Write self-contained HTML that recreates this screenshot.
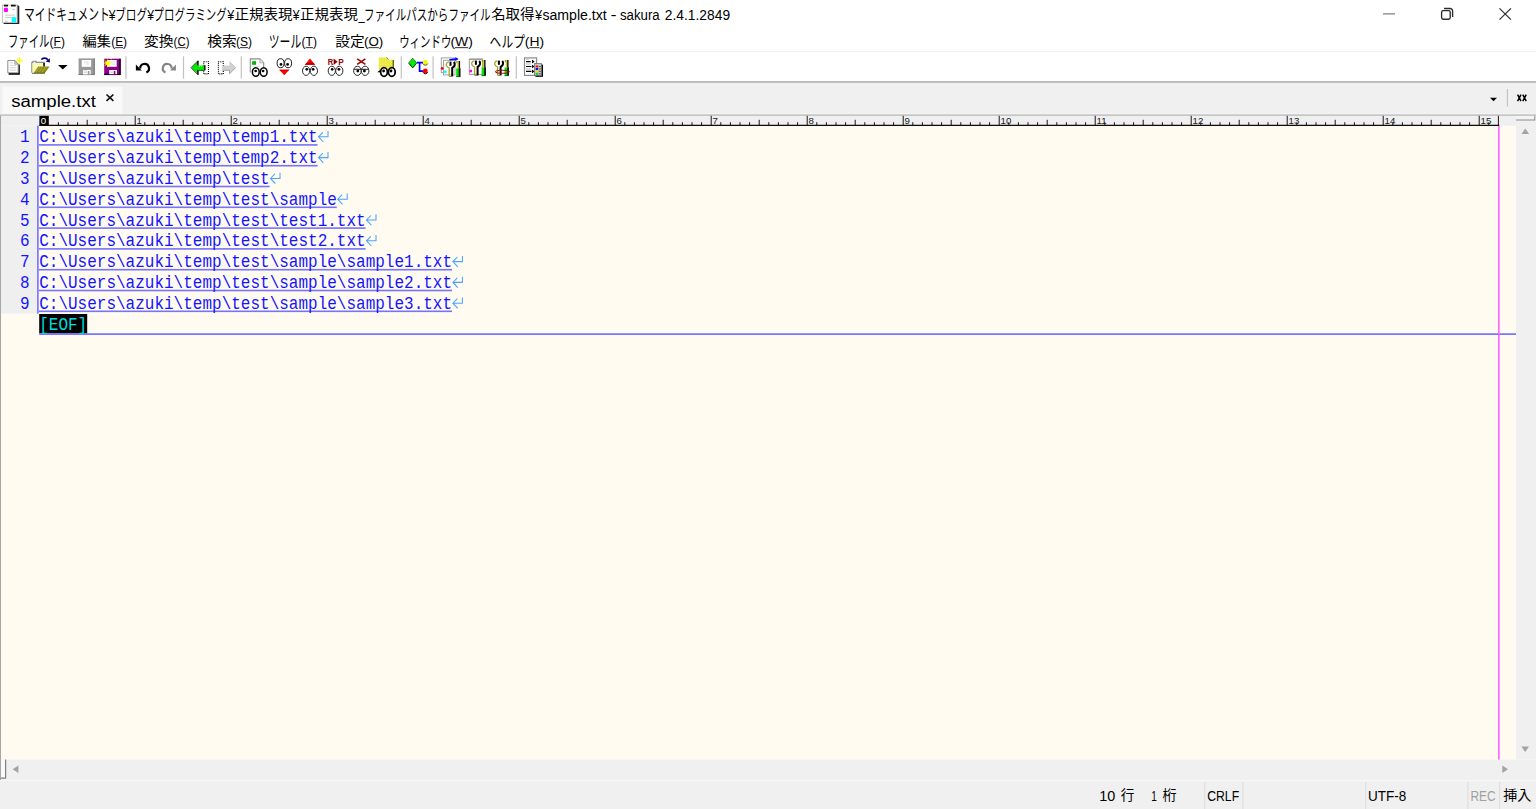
<!DOCTYPE html>
<html lang="ja"><head><meta charset="utf-8"><title>sample.txt - sakura</title>
<style>
html,body{margin:0;padding:0;background:#fff;overflow:hidden;width:1536px;height:809px}
#root{position:absolute;left:0;top:0;width:1920px;height:1012px;transform:scale(0.8);transform-origin:0 0;background:#fff;overflow:hidden}
.t{position:absolute;white-space:pre;line-height:1;transform-origin:0 100%;display:block}
.t u{text-decoration:underline;text-decoration-thickness:1.4px;text-underline-offset:1.9px;text-decoration-skip-ink:none}
svg{position:absolute;overflow:visible}
</style></head><body><div id="root">
<svg style="left:0;top:0" width="1920" height="1011.25" viewBox="0 0 1536 809"><rect x="0" y="0" width="1536" height="51.2" fill="#fff"/><rect x="0" y="51.1" width="1536" height="1.5" fill="#f0f0f0"/><rect x="0" y="52.4" width="1536" height="29" fill="#fff"/><rect x="0" y="81.1" width="1536" height="1.9" fill="#b4b4b4"/><rect x="0" y="82.8" width="1536" height="33" fill="#f0f0f0"/><rect x="2.4" y="86.4" width="120" height="28.4" fill="#f9f9f9"/><rect x="0" y="113.6" width="1536" height="0.8" fill="#fbfbfb"/><rect x="0" y="114.4" width="1536" height="1.4" fill="#bcbcbc"/><rect x="0" y="116" width="1516" height="10" fill="#efefef"/><rect x="0" y="125.6" width="1516" height="634" fill="#fffbf0"/><rect x="0" y="125.6" width="37.6" height="188" fill="#efefef"/><rect x="37.1" y="125.6" width="1.6" height="188" fill="#7272ff"/><rect x="1516" y="116" width="20" height="643.6" fill="#f0f0f0"/><rect x="0" y="759.6" width="1536" height="20.4" fill="#f0f0f0"/><rect x="0" y="780" width="1536" height="29" fill="#f0f0f0"/><rect x="0" y="780" width="1536" height="0.8" fill="#fbfbfb"/><rect x="0" y="115.4" width="1" height="664.6" fill="#a6a6a6"/><rect x="1204.4" y="782" width="0.8" height="27" fill="#d7d7d7"/><rect x="1242.5" y="782" width="0.8" height="27" fill="#d7d7d7"/><rect x="1365.4" y="782" width="0.8" height="27" fill="#d7d7d7"/><rect x="1467.5" y="782" width="0.8" height="27" fill="#d7d7d7"/><rect x="1499.3" y="782" width="0.8" height="27" fill="#d7d7d7"/><rect x="38.8" y="144.1" width="278.8" height="1.6" fill="#7474ff"/><path transform="translate(317.6 126.8)" d="M10.4 4.3V10H1 M5.3 5.5L0.9 10L5.7 15.2" fill="none" stroke="#4aa4ff" stroke-width="1.05"/><rect x="38.8" y="164.9" width="278.8" height="1.6" fill="#7474ff"/><path transform="translate(317.6 147.6)" d="M10.4 4.3V10H1 M5.3 5.5L0.9 10L5.7 15.2" fill="none" stroke="#4aa4ff" stroke-width="1.05"/><rect x="38.8" y="185.7" width="230.8" height="1.6" fill="#7474ff"/><path transform="translate(269.6 168.4)" d="M10.4 4.3V10H1 M5.3 5.5L0.9 10L5.7 15.2" fill="none" stroke="#4aa4ff" stroke-width="1.05"/><rect x="38.8" y="206.5" width="298" height="1.6" fill="#7474ff"/><path transform="translate(336.8 189.2)" d="M10.4 4.3V10H1 M5.3 5.5L0.9 10L5.7 15.2" fill="none" stroke="#4aa4ff" stroke-width="1.05"/><rect x="38.8" y="227.3" width="326.8" height="1.6" fill="#7474ff"/><path transform="translate(365.6 210)" d="M10.4 4.3V10H1 M5.3 5.5L0.9 10L5.7 15.2" fill="none" stroke="#4aa4ff" stroke-width="1.05"/><rect x="38.8" y="248.1" width="326.8" height="1.6" fill="#7474ff"/><path transform="translate(365.6 230.8)" d="M10.4 4.3V10H1 M5.3 5.5L0.9 10L5.7 15.2" fill="none" stroke="#4aa4ff" stroke-width="1.05"/><rect x="38.8" y="268.9" width="413.2" height="1.6" fill="#7474ff"/><path transform="translate(452 251.6)" d="M10.4 4.3V10H1 M5.3 5.5L0.9 10L5.7 15.2" fill="none" stroke="#4aa4ff" stroke-width="1.05"/><rect x="38.8" y="289.7" width="413.2" height="1.6" fill="#7474ff"/><path transform="translate(452 272.4)" d="M10.4 4.3V10H1 M5.3 5.5L0.9 10L5.7 15.2" fill="none" stroke="#4aa4ff" stroke-width="1.05"/><rect x="38.8" y="310.5" width="413.2" height="1.6" fill="#7474ff"/><path transform="translate(452 293.2)" d="M10.4 4.3V10H1 M5.3 5.5L0.9 10L5.7 15.2" fill="none" stroke="#4aa4ff" stroke-width="1.05"/><rect x="39.2" y="314" width="48" height="19.4" fill="#000"/><rect x="39.2" y="333.3" width="1476.8" height="1.6" fill="#6a6aff"/><rect x="1498.1" y="125.6" width="1.5" height="634" fill="#ff58ff"/></svg>

<span id="t1" class="t" style="left:29.98px;top:28.35px;font-size:16.5px;font-family:'Liberation Sans','Noto Sans CJK JP',sans-serif;color:#000;transform:translateY(-100%) scale(0.8117,1.2091);">マイドキュメント</span>
<span id="t2" class="t" style="left:136.02px;top:28.75px;font-size:18.75px;font-family:'Liberation Sans','Noto Sans CJK JP',sans-serif;color:#000;transform:translateY(-100%) scale(0.8121,1);">¥</span>
<span id="t3" class="t" style="left:143.55px;top:27.85px;font-size:16.5px;font-family:'Liberation Sans','Noto Sans CJK JP',sans-serif;color:#000;transform:translateY(-100%) scale(0.8054,1.0857);">ブログ</span>
<span id="t4" class="t" style="left:184.35px;top:28.75px;font-size:18.75px;font-family:'Liberation Sans','Noto Sans CJK JP',sans-serif;color:#000;transform:translateY(-100%) scale(0.8121,1);">¥</span>
<span id="t5" class="t" style="left:192.02px;top:27.9px;font-size:16.5px;font-family:'Liberation Sans','Noto Sans CJK JP',sans-serif;color:#000;transform:translateY(-100%) scale(0.7917,1.1083);">プログラミング</span>
<span id="t6" class="t" style="left:283.92px;top:28.75px;font-size:18.75px;font-family:'Liberation Sans','Noto Sans CJK JP',sans-serif;color:#000;transform:translateY(-100%) scale(0.8375,1);">¥</span>
<span id="t7" class="t" style="left:292.72px;top:26.14px;font-size:16.5px;font-family:'Liberation Sans','Noto Sans CJK JP',sans-serif;color:#000;transform:translateY(-100%) scale(1.1014,1.0417);">正規表現</span>
<span id="t8" class="t" style="left:366.25px;top:28.75px;font-size:18.75px;font-family:'Liberation Sans','Noto Sans CJK JP',sans-serif;color:#000;transform:translateY(-100%) scale(0.8121,1);">¥</span>
<span id="t9" class="t" style="left:374.91px;top:26.14px;font-size:16.5px;font-family:'Liberation Sans','Noto Sans CJK JP',sans-serif;color:#000;transform:translateY(-100%) scale(1.0966,1.0417);">正規表現</span>
<span id="t10" class="t" style="left:447.73px;top:28.75px;font-size:18.75px;font-family:'Liberation Sans','Noto Sans CJK JP',sans-serif;color:#000;transform:translateY(-100%) scale(0.7429,1);">_</span>
<span id="t11" class="t" style="left:454.88px;top:27.94px;font-size:16.5px;font-family:'Liberation Sans','Noto Sans CJK JP',sans-serif;color:#000;transform:translateY(-100%) scale(0.7994,1.1319);">ファイルパスからファイル</span>
<span id="t12" class="t" style="left:614.01px;top:26.1px;font-size:16.5px;font-family:'Liberation Sans','Noto Sans CJK JP',sans-serif;color:#000;transform:translateY(-100%) scale(1.0909,1.0204);">名取得</span>
<span id="t13" class="t" style="left:668.75px;top:28.75px;font-size:18.75px;font-family:'Liberation Sans','Noto Sans CJK JP',sans-serif;color:#000;transform:translateY(-100%) scale(0.8182,1);">¥</span>
<span id="t14" class="t" style="left:677.54px;top:28.75px;font-size:18.75px;font-family:'Liberation Sans','Noto Sans CJK JP',sans-serif;color:#000;transform:translateY(-100%) scale(0.9410,1);">sample.txt</span>
<span id="t15" class="t" style="left:762.92px;top:28.75px;font-size:18.75px;font-family:'Liberation Sans','Noto Sans CJK JP',sans-serif;color:#000;transform:translateY(-100%) scale(1.2143,1);">-</span>
<span id="t16" class="t" style="left:775.39px;top:28.75px;font-size:18.75px;font-family:'Liberation Sans','Noto Sans CJK JP',sans-serif;color:#000;transform:translateY(-100%) scale(0.8820,1);">sakura</span>
<span id="t17" class="t" style="left:831.01px;top:28.75px;font-size:18.75px;font-family:'Liberation Sans','Noto Sans CJK JP',sans-serif;color:#000;transform:translateY(-100%) scale(0.9209,1);">2.4.1.2849</span>
<span id="m1" class="t" style="left:9.94px;top:61.51px;font-size:16.5px;font-family:'Liberation Sans','Noto Sans CJK JP',sans-serif;color:#000;transform:translateY(-100%) scale(0.7831,1.1822);">ファイル</span>
<span id="m1k" class="t" style="left:62.25px;top:61.13px;font-size:16.88px;font-family:'Liberation Sans','Noto Sans CJK JP',sans-serif;color:#000;transform:translateY(-100%) scale(0.8903,1);">(<u>F</u>)</span>
<span id="m2" class="t" style="left:103.34px;top:60.24px;font-size:16.5px;font-family:'Liberation Sans','Noto Sans CJK JP',sans-serif;color:#000;transform:translateY(-100%) scale(1.0784,1.0204);">編集</span>
<span id="m2k" class="t" style="left:138.94px;top:61.13px;font-size:16.88px;font-family:'Liberation Sans','Noto Sans CJK JP',sans-serif;color:#000;transform:translateY(-100%) scale(0.8831,1);">(<u>E</u>)</span>
<span id="m3" class="t" style="left:180.2px;top:60.24px;font-size:16.5px;font-family:'Liberation Sans','Noto Sans CJK JP',sans-serif;color:#000;transform:translateY(-100%) scale(1.1240,1.0204);">変換</span>
<span id="m3k" class="t" style="left:217.1px;top:61.13px;font-size:16.88px;font-family:'Liberation Sans','Noto Sans CJK JP',sans-serif;color:#000;transform:translateY(-100%) scale(0.8441,1);">(<u>C</u>)</span>
<span id="m4" class="t" style="left:258.94px;top:60.24px;font-size:16.5px;font-family:'Liberation Sans','Noto Sans CJK JP',sans-serif;color:#000;transform:translateY(-100%) scale(1.1149,1.0204);">検索</span>
<span id="m4k" class="t" style="left:295.41px;top:61.13px;font-size:16.88px;font-family:'Liberation Sans','Noto Sans CJK JP',sans-serif;color:#000;transform:translateY(-100%) scale(0.8939,1);">(<u>S</u>)</span>
<span id="m5" class="t" style="left:336.19px;top:62.5px;font-size:16.5px;font-family:'Liberation Sans','Noto Sans CJK JP',sans-serif;color:#000;transform:translateY(-100%) scale(0.8173,1.2667);">ツール</span>
<span id="m5k" class="t" style="left:377.25px;top:61.13px;font-size:16.88px;font-family:'Liberation Sans','Noto Sans CJK JP',sans-serif;color:#000;transform:translateY(-100%) scale(0.8903,1);">(<u>T</u>)</span>
<span id="m6" class="t" style="left:418.99px;top:60.29px;font-size:16.5px;font-family:'Liberation Sans','Noto Sans CJK JP',sans-serif;color:#000;transform:translateY(-100%) scale(1.1149,1.0417);">設定</span>
<span id="m6k" class="t" style="left:455.27px;top:61.13px;font-size:16.88px;font-family:'Liberation Sans','Noto Sans CJK JP',sans-serif;color:#000;transform:translateY(-100%) scale(0.9859,1);">(<u>O</u>)</span>
<span id="m7" class="t" style="left:499.3px;top:61.94px;font-size:16.5px;font-family:'Liberation Sans','Noto Sans CJK JP',sans-serif;color:#000;transform:translateY(-100%) scale(0.7896,1.1565);">ウィンドウ</span>
<span id="m7k" class="t" style="left:562.53px;top:61.13px;font-size:16.88px;font-family:'Liberation Sans','Noto Sans CJK JP',sans-serif;color:#000;transform:translateY(-100%) scale(1.0300,1);">(<u>W</u>)</span>
<span id="m8" class="t" style="left:611.7px;top:62.17px;font-size:16.5px;font-family:'Liberation Sans','Noto Sans CJK JP',sans-serif;color:#000;transform:translateY(-100%) scale(0.8922,1.1565);">ヘルプ</span>
<span id="m8k" class="t" style="left:656.28px;top:61.13px;font-size:16.88px;font-family:'Liberation Sans','Noto Sans CJK JP',sans-serif;color:#000;transform:translateY(-100%) scale(1.0294,1);">(<u>H</u>)</span>
<span id="tab" class="t" style="left:13.81px;top:137.25px;font-size:19.5px;font-family:'Liberation Sans','Noto Sans CJK JP',sans-serif;color:#000;transform:translateY(-100%) scale(1.1915,1);">sample.txt</span>
<span id="s1" class="t" style="left:1374.37px;top:1005.31px;font-size:18.75px;font-family:'Liberation Sans','Noto Sans CJK JP',sans-serif;color:#000;transform:translateY(-100%) scale(0.9600,1);">10</span>
<span id="s1b" class="t" style="left:1400.99px;top:1003.92px;font-size:18.75px;font-family:'Liberation Sans','Noto Sans CJK JP',sans-serif;color:#000;transform:translateY(-100%) scale(0.9091,0.9164);">行</span>
<span id="s2" class="t" style="left:1438.95px;top:1005.31px;font-size:18.75px;font-family:'Liberation Sans','Noto Sans CJK JP',sans-serif;color:#000;transform:translateY(-100%) scale(0.6692,1);">1</span>
<span id="s2b" class="t" style="left:1453.41px;top:1003.37px;font-size:18.75px;font-family:'Liberation Sans','Noto Sans CJK JP',sans-serif;color:#000;transform:translateY(-100%) scale(0.9393,0.9);">桁</span>
<span id="s3" class="t" style="left:1509.24px;top:1005.31px;font-size:18.75px;font-family:'Liberation Sans','Noto Sans CJK JP',sans-serif;color:#000;transform:translateY(-100%) scale(0.8146,1);">CRLF</span>
<span id="s4" class="t" style="left:1709.69px;top:1005.31px;font-size:18.75px;font-family:'Liberation Sans','Noto Sans CJK JP',sans-serif;color:#000;transform:translateY(-100%) scale(0.9031,1);">UTF-8</span>
<span id="s5" class="t" style="left:1837.71px;top:1005.31px;font-size:18.75px;font-family:'Liberation Sans','Noto Sans CJK JP',sans-serif;color:#a0a0a0;transform:translateY(-100%) scale(0.7966,1);">REC</span>
<span id="s6" class="t" style="left:1879.27px;top:1003.92px;font-size:18.75px;font-family:'Liberation Sans','Noto Sans CJK JP',sans-serif;color:#000;transform:translateY(-100%) scale(0.9414,0.9164);">挿入</span>
<span id="n0" class="t" style="left:25.0px;top:184.06px;font-size:20.0px;font-family:'Liberation Mono',monospace;color:#1414ff;transform:translateY(-100%) scale(1.0000,1.2);">1</span>
<span id="l0" class="t" style="left:49.0px;top:184.06px;font-size:20.0px;font-family:'Liberation Mono',monospace;color:#1414ff;transform:translateY(-100%) scale(1.0000,1.2);">C:\Users\azuki\temp\temp1.txt</span>
<span id="n1" class="t" style="left:25.0px;top:210.12px;font-size:20.0px;font-family:'Liberation Mono',monospace;color:#1414ff;transform:translateY(-100%) scale(1.0000,1.2);">2</span>
<span id="l1" class="t" style="left:49.0px;top:210.12px;font-size:20.0px;font-family:'Liberation Mono',monospace;color:#1414ff;transform:translateY(-100%) scale(1.0000,1.2);">C:\Users\azuki\temp\temp2.txt</span>
<span id="n2" class="t" style="left:25.0px;top:236.19px;font-size:20.0px;font-family:'Liberation Mono',monospace;color:#1414ff;transform:translateY(-100%) scale(1.0000,1.2);">3</span>
<span id="l2" class="t" style="left:49.0px;top:236.19px;font-size:20.0px;font-family:'Liberation Mono',monospace;color:#1414ff;transform:translateY(-100%) scale(1.0000,1.2);">C:\Users\azuki\temp\test</span>
<span id="n3" class="t" style="left:25.0px;top:262.25px;font-size:20.0px;font-family:'Liberation Mono',monospace;color:#1414ff;transform:translateY(-100%) scale(1.0000,1.2);">4</span>
<span id="l3" class="t" style="left:49.0px;top:262.25px;font-size:20.0px;font-family:'Liberation Mono',monospace;color:#1414ff;transform:translateY(-100%) scale(1.0000,1.2);">C:\Users\azuki\temp\test\sample</span>
<span id="n4" class="t" style="left:25.0px;top:288.31px;font-size:20.0px;font-family:'Liberation Mono',monospace;color:#1414ff;transform:translateY(-100%) scale(1.0000,1.2);">5</span>
<span id="l4" class="t" style="left:49.0px;top:288.31px;font-size:20.0px;font-family:'Liberation Mono',monospace;color:#1414ff;transform:translateY(-100%) scale(1.0000,1.2);">C:\Users\azuki\temp\test\test1.txt</span>
<span id="n5" class="t" style="left:25.0px;top:314.06px;font-size:20.0px;font-family:'Liberation Mono',monospace;color:#1414ff;transform:translateY(-100%) scale(1.0000,1.2);">6</span>
<span id="l5" class="t" style="left:49.0px;top:314.06px;font-size:20.0px;font-family:'Liberation Mono',monospace;color:#1414ff;transform:translateY(-100%) scale(1.0000,1.2);">C:\Users\azuki\temp\test\test2.txt</span>
<span id="n6" class="t" style="left:25.0px;top:340.12px;font-size:20.0px;font-family:'Liberation Mono',monospace;color:#1414ff;transform:translateY(-100%) scale(1.0000,1.2);">7</span>
<span id="l6" class="t" style="left:49.0px;top:340.12px;font-size:20.0px;font-family:'Liberation Mono',monospace;color:#1414ff;transform:translateY(-100%) scale(1.0000,1.2);">C:\Users\azuki\temp\test\sample\sample1.txt</span>
<span id="n7" class="t" style="left:25.0px;top:366.19px;font-size:20.0px;font-family:'Liberation Mono',monospace;color:#1414ff;transform:translateY(-100%) scale(1.0000,1.2);">8</span>
<span id="l7" class="t" style="left:49.0px;top:366.19px;font-size:20.0px;font-family:'Liberation Mono',monospace;color:#1414ff;transform:translateY(-100%) scale(1.0000,1.2);">C:\Users\azuki\temp\test\sample\sample2.txt</span>
<span id="n8" class="t" style="left:25.0px;top:392.25px;font-size:20.0px;font-family:'Liberation Mono',monospace;color:#1414ff;transform:translateY(-100%) scale(1.0000,1.2);">9</span>
<span id="l8" class="t" style="left:49.0px;top:392.25px;font-size:20.0px;font-family:'Liberation Mono',monospace;color:#1414ff;transform:translateY(-100%) scale(1.0000,1.2);">C:\Users\azuki\temp\test\sample\sample3.txt</span>
<span id="eof" class="t" style="left:49.0px;top:418.12px;font-size:20.0px;font-family:'Liberation Mono',monospace;color:#00dcdc;transform:translateY(-100%) scale(1.0000,1.1);">[EOF]</span>
<svg style="left:0;top:0" width="1920" height="1011.25" viewBox="0 0 1536 809"><path d="M8.6 72.9v1.9h11.2V64.6h-1.7v8.3z" fill="#000"/>
<path d="M7.8 60.5h7l3.4 3.6v8.7H7.8z" fill="#fff" stroke="#8c8c8c" stroke-width="1"/>
<path d="M14.8 60.5v3.6h3.4z" fill="#e4e4e4" stroke="#8c8c8c" stroke-width=".8"/>
<path d="M9.6 62.8h3.8M9.6 65.3h6.6M9.6 67.7h6.6M9.6 70.1h6.6" stroke="#cfcfcf" stroke-width=".9"/>
<path d="M19.5 57.5v6M16.5 60.5h6" stroke="#ffff00" stroke-width="1.4"/>
<path d="M17 58h1.2v1.2H17zM21 58h1.2v1.2H21zM21 62h1.2v1.2H21z" fill="#ffff9a"/>
<path d="M31.8 72.8V62.4h1.1v-1.1h3.3v1.1h8.1v4.3" fill="#ecece6" stroke="#8c8c8c" stroke-width="1.1"/>
<path d="M32.7 63.3h10.4v3.3H37.4l-4.7 6z" fill="#fbfbd8"/>
<path d="M33.2 64v8M35 64v5M37 64.4h6" stroke="#ffff20" stroke-width="1" stroke-dasharray="1 1"/>
<rect x="43.3" y="62.9" width="1.4" height="3.7" fill="#000"/>
<path d="M33.6 73.2L38.2 66.6h11.4l-4.8 6.6z" fill="#8f8f12"/>
<path d="M36 72l3.4-4.6M39 72l3.4-4.6M42 72l3.4-4.6" stroke="#b8b850" stroke-width=".7"/>
<path d="M32 73.3h12.8" stroke="#5a5a30" stroke-width=".9"/>
<path d="M41.4 59.7C42.6 57.6 46.4 57.4 47.8 59.8" stroke="#00008c" stroke-width="1.7" fill="none"/>
<path d="M45.6 61.6l4.3 1-.1-4.4z" fill="#00008c"/>
<path d="M58 65h9.6l-4.8 4.6z" fill="#000"/>
<rect x="78.6" y="58.4" width="16.2" height="16.7" fill="#9a9a9a"/>
<path d="M93.6 58.4h1.2v16.7H78.6v-1.2h15z" fill="#7e7e7e"/>
<rect x="81.7" y="60" width="9.4" height="6.8" fill="#fff"/>
<path d="M84 62h5M86 64h3" stroke="#d0d0d0" stroke-width=".8"/>
<rect x="83" y="70" width="7.7" height="4.4" fill="#fff"/>
<rect x="87.8" y="71" width="1.6" height="4.1" fill="#9a9a9a"/><path d="M83.6 71h3.6M83.6 72.6h3.6" stroke="#c8c8c8" stroke-width=".8"/>
<rect x="104.2" y="58.7" width="16.5" height="16.4" fill="#8a008a"/>
<path d="M119.2 58.7h1.5v16.4h-16.5v-1.3h15z" fill="#1a001a"/>
<rect x="107.3" y="60" width="9.4" height="6.8" fill="#fff"/>
<path d="M110 62h5M112 64h3" stroke="#d0d0d0" stroke-width=".8"/>
<rect x="109.2" y="70" width="7.8" height="4.2" fill="#fff"/>
<rect x="113.8" y="71" width="1.6" height="4.1" fill="#8a008a"/><path d="M109.8 71h3.4M109.8 72.6h3.4" stroke="#c8c8c8" stroke-width=".8"/>
<g transform="translate(107.2 63.1) scale(.82) translate(-107.2 -63.1)"><path d="M107.2 57.6l.9 3.6 3-2.2-1.6 3.2 3.8.9-3.7.9 2.6 3.6-3.6-2.4-.9 3.8-.9-3.8-3.2 1.6 2-2.8-3.4-.9 3.4-.9-2-3.2 3 2.2z" fill="#ffff00"/></g>
<path d="M102.4 58.4h1.2v1.2h-1.2zM110.6 58h1.2v1.2h-1.2zM101.6 67h1v1h-1z" fill="#ffff60"/>
<path d="M140.2 68.4A4.4 4.4 0 1 1 146.4 72.4" stroke="#000" stroke-width="2.2" fill="none"/>
<path d="M135.9 64.6v6h5.9z" fill="#000"/>
<path d="M171.6 68.4A4.4 4.4 0 1 0 165.4 72.4" stroke="#858585" stroke-width="2.2" fill="none"/>
<path d="M175.9 64.6v6H170z" fill="#858585"/>
<path d="M203.7 61.7h4.8v12.2h-4.8z" stroke="#000" stroke-width="1.1" fill="none" stroke-dasharray="1 1"/>
<path d="M191.3 67.7l6.2-5.9v3.6h6.9v4.8h-6.9v3.4z" fill="#00ea00"/>
<path d="M197.7 61L191 67.7l6.7 6.8" stroke="#083808" stroke-width=".9" fill="none"/>
<path d="M197.9 60.8v4.8M197.9 70v4.8" stroke="#000" stroke-width="1.5"/>
<path d="M204.1 65.3h1.4v5h-1.4z" fill="#000"/>
<path d="M198.6 70.5h6" stroke="#004800" stroke-width=".8"/>
<path d="M198.8 66.5h4" stroke="#c8ffc8" stroke-width=".8" stroke-dasharray="1 1"/>
<path d="M223.3 61.7h-4.9v12.2h4.9z" stroke="#000" stroke-width="1.1" fill="none" stroke-dasharray="1 1"/>
<path d="M235.7 67.7l-6.2-5.9v3.6h-7.1v4.8h7.1v3.4z" fill="#cfcfcf"/>
<path d="M222.4 70.3h7.1v3.5l6-6" stroke="#9c9c9c" stroke-width=".9" fill="none"/>
<path d="M229.4 61.6l6.2 6" stroke="#b4b4b4" stroke-width=".7" fill="none"/>
<path d="M250.3 72.6V58.9h9.6l3.8 3.9v6" fill="#fff" stroke="#8c8c8c" stroke-width="1.1"/>
<path d="M259.9 58.9v3.9h3.8" fill="#eee" stroke="#9c9c9c" stroke-width=".8"/>
<rect x="252.1" y="61.2" width="4" height="3.6" fill="#00b400"/>
<path d="M252 66.2h8" stroke="#d8d8d8" stroke-width=".8"/>
<g fill="#fff" stroke="#000" stroke-width="1.5"><ellipse cx="255.8" cy="72" rx="3.4" ry="4.3"/><ellipse cx="263.7" cy="72" rx="3.4" ry="4.3"/></g>
<circle cx="255.7" cy="71" r="1.35"/><circle cx="263.1" cy="71" r="1.35"/>
<g fill="#fff" stroke="#1c1c1c" stroke-width="1"><ellipse cx="280.6" cy="63.2" rx="3.5" ry="4.5"/><ellipse cx="288.1" cy="63.2" rx="3.5" ry="4.5"/></g>
<circle cx="281" cy="64.4" r="1.35"/><circle cx="287.6" cy="64.4" r="1.35"/>
<path d="M279.3 69.8h10l-5 5.4z" fill="#ff0000"/><path d="M279.3 69.8h10l-.6.8h-8.8z" fill="#a00000"/>
<path d="M310 58.5l5.1 6.2H304.9z" fill="#ff0000"/><path d="M306.1 63.2h7.8l1.2 1.5H304.9z" fill="#a00000"/>
<g fill="#fff" stroke="#262626" stroke-width="1"><ellipse cx="306.1" cy="70.8" rx="3.6" ry="4.6"/><ellipse cx="313.9" cy="70.8" rx="3.6" ry="4.6"/></g>
<circle cx="306.8" cy="69.3" r="1.35"/><circle cx="313.1" cy="69.3" r="1.35"/>
<text x="327.8" y="64.9" font-family="'Liberation Sans',sans-serif" font-weight="bold" font-size="9.4" fill="#900000" textLength="5.5" lengthAdjust="spacingAndGlyphs">R</text>
<path d="M333.6 58.4l4 3.3-4 3.3z" fill="#900000"/>
<text x="338.2" y="64.9" font-family="'Liberation Sans',sans-serif" font-weight="bold" font-size="9.4" fill="#900000" textLength="5.5" lengthAdjust="spacingAndGlyphs">P</text>
<g fill="#fff" stroke="#262626" stroke-width="1"><ellipse cx="331.8" cy="70.8" rx="3.6" ry="4.6"/><ellipse cx="339.3" cy="70.8" rx="3.6" ry="4.6"/></g>
<circle cx="332.2" cy="69.3" r="1.35"/><circle cx="338.9" cy="69.3" r="1.35"/>
<path d="M357.2 58.8l8.2 5.6M365.4 58.8l-8.2 5.6" stroke="#a00000" stroke-width="1.5"/>
<g fill="#fff" stroke="#262626" stroke-width="1"><ellipse cx="357.4" cy="70.8" rx="3.8" ry="4.6"/><ellipse cx="365.1" cy="70.8" rx="3.8" ry="4.6"/></g>
<path d="M354 69.3h6.8M361.7 69.3h6.8" stroke="#222" stroke-width="1"/>
<circle cx="357.8" cy="71" r="1.4"/><circle cx="364.4" cy="71" r="1.4"/>
<path d="M378.8 70.4V57.4h7.6l2 2.3h5.6v10.7z" fill="#e8e83e"/>
<path d="M392.6 59.9H394v9.5h-1.4z" fill="#6c6c00"/>
<path d="M380 61h12M380 64.2h12M380 67.4h12" stroke="#fff" stroke-width=".8" stroke-dasharray=".8 1.7" opacity=".85"/>
<path d="M386.4 57.2l2.2 2.4" stroke="#8a7a20" stroke-width=".9"/>
<path d="M377.2 72.3l2.6-2h1.4v2z" fill="#000"/>
<g fill="#fff" stroke="#000" stroke-width="1.8"><ellipse cx="384" cy="72" rx="3.4" ry="4.3"/><ellipse cx="391.8" cy="72" rx="3.4" ry="4.3"/></g>
<circle cx="383.6" cy="71" r="1.4"/><circle cx="391" cy="71" r="1.4"/>
<path d="M417 62.6h6M419.6 62.6v8.6h3.8" stroke="#0000ff" stroke-width="1.7" fill="none"/>
<path d="M412.7 58.2l4 4.8-4 4.8-4-4.8z" fill="#00f000" stroke="#0a5a0a" stroke-width=".7"/>
<path d="M408.9 63.4l3.8 4.4 3.8-4.4" stroke="#004800" stroke-width="1" fill="none"/>
<circle cx="425.3" cy="62.4" r="2.4" fill="#f4f400"/><path d="M423 63.6a2.6 2.6 0 0 0 4.8 0" stroke="#5a5a00" stroke-width="1" fill="none"/>
<circle cx="425.3" cy="71" r="2.4" fill="#ff0000"/><path d="M423 72.2a2.6 2.6 0 0 0 4.8 0" stroke="#300000" stroke-width="1" fill="none"/>
<rect x="441.3" y="57.9" width="13" height="14.7" fill="#fff" stroke="#a4a4a4" stroke-width="1"/>
<rect x="443.5" y="60.3" width="11.5" height="14.6" fill="#fff" stroke="#a4a4a4" stroke-width="1"/>
<circle cx="442.2" cy="68.4" r="1.4" fill="#ff0000"/><circle cx="445.3" cy="71.8" r="1.5" fill="#00ffff"/>
<path d="M449.4 59.7l6.4-.6" stroke="#0000ff" stroke-width="1.6"/><path d="M455.3 56.9l3.3 2.1-3.3 2.1z" fill="#0000ff"/>
<g transform="translate(445.6 61.2)"><path d="M3.4 .6C1.2 .8 .4 2.6 .8 4.2C1.2 5.8 2.6 6.4 3.6 6.8V15" stroke="#a8a028" stroke-width="1.3" fill="none"/>
<path d="M4.9 .4V4.6" stroke="#000" stroke-width="2"/>
<path d="M8.2 .8C9.8 2.4 9.4 5.4 6.6 6.8V15.2" stroke="#000" stroke-width="2" fill="none"/>
<path d="M3.6 15.2h3" stroke="#8c8420" stroke-width="1"/>
<rect x="11.8" y="-.2" width="1.5" height="7.2" fill="#d8cc00"/>
<rect x="13.2" y="-.2" width="1.3" height="7.2" fill="#000"/>
<rect x="10.8" y="-.2" width="1" height="2.2" fill="#8c8420"/>
<rect x="10.6" y="7.2" width="2.8" height="8.2" fill="#00e400"/>
<rect x="13.2" y="7" width="1.7" height="8.4" fill="#000"/>
<path d="M10.6 15.4h4.3" stroke="#004000" stroke-width=".8"/></g>
<rect x="469.3" y="59.4" width="13.3" height="15" fill="#fff" stroke="#9c9c9c" stroke-width="1"/>
<path d="M469.3 59.2h13.3" stroke="#9c9c9c" stroke-width="1.6"/>
<rect x="469.5" y="69.8" width="2.5" height="2.5" fill="#ff00ff"/>
<g transform="translate(471 60.2)"><path d="M3.4 .6C1.2 .8 .4 2.6 .8 4.2C1.2 5.8 2.6 6.4 3.6 6.8V15" stroke="#a8a028" stroke-width="1.3" fill="none"/>
<path d="M4.9 .4V4.6" stroke="#000" stroke-width="2"/>
<path d="M8.2 .8C9.8 2.4 9.4 5.4 6.6 6.8V15.2" stroke="#000" stroke-width="2" fill="none"/>
<path d="M3.6 15.2h3" stroke="#8c8420" stroke-width="1"/>
<rect x="11.8" y="-.2" width="1.5" height="7.2" fill="#d8cc00"/>
<rect x="13.2" y="-.2" width="1.3" height="7.2" fill="#000"/>
<rect x="10.8" y="-.2" width="1" height="2.2" fill="#8c8420"/>
<rect x="10.6" y="7.2" width="2.8" height="8.2" fill="#00e400"/>
<rect x="13.2" y="7" width="1.7" height="8.4" fill="#000"/>
<path d="M10.6 15.4h4.3" stroke="#004000" stroke-width=".8"/></g>
<g transform="translate(494 60.2)"><path d="M3.4 .6C1.2 .8 .4 2.6 .8 4.2C1.2 5.8 2.6 6.4 3.6 6.8V15" stroke="#a8a028" stroke-width="1.3" fill="none"/>
<path d="M4.9 .4V4.6" stroke="#000" stroke-width="2"/>
<path d="M8.2 .8C9.8 2.4 9.4 5.4 6.6 6.8V15.2" stroke="#000" stroke-width="2" fill="none"/>
<path d="M3.6 15.2h3" stroke="#8c8420" stroke-width="1"/>
<rect x="11.8" y="-.2" width="1.5" height="7.2" fill="#d8cc00"/>
<rect x="13.2" y="-.2" width="1.3" height="7.2" fill="#000"/>
<rect x="10.8" y="-.2" width="1" height="2.2" fill="#8c8420"/>
<rect x="10.6" y="7.2" width="2.8" height="8.2" fill="#00e400"/>
<rect x="13.2" y="7" width="1.7" height="8.4" fill="#000"/>
<path d="M10.6 15.4h4.3" stroke="#004000" stroke-width=".8"/></g>
<ellipse cx="502.4" cy="71.8" rx="7.2" ry="1.5" fill="none" stroke="#a00000" stroke-width="1"/>
<rect x="524.5" y="57.9" width="12.1" height="17.5" fill="#fff" stroke="#8c8c8c" stroke-width="1.2"/>
<path d="M526 64h5M526 69h5M526 59.6h3" stroke="#d4d4d4" stroke-width="1.4"/><path d="M526 61.6h4.6M526 66.5h5.4M526 71.4h5.4" stroke="#000" stroke-width="1.2"/>
<path d="M532 59.8l2.7 1.8-2.7 1.8zM532 64.7l2.7 1.8-2.7 1.8zM532 69.6l2.7 1.8-2.7 1.8z" fill="#000"/>
<path d="M535.4 64.6h7.6v12.2h-7.6z" fill="#000"/>
<rect x="534.6" y="63.6" width="6.9" height="11.8" fill="#c4c4c4" stroke="#6c6c6c" stroke-width=".8"/>
<rect x="535.7" y="65.6" width="2.4" height="1.8" fill="#ff0000"/><rect x="535.7" y="68" width="2.4" height="1.9" fill="#0000e6"/>
<rect x="535.7" y="70.5" width="2.4" height="1.8" fill="#e6e600"/><rect x="535.7" y="72.9" width="2.4" height="1.8" fill="#00d800"/>
<path d="M538.8 66.5h2M538.8 69h2M538.8 71.4h2M538.8 73.8h2" stroke="#444" stroke-width=".9"/>
<path d="M125.9 56.2v22.5M183.5 56.2v22.5M241.3 56.2v22.5M401.3 56.2v22.5M433.1 56.2v22.5M516.3 56.2v22.5" stroke="#c2c2c2" stroke-width="1.2"/>

<g>
<path d="M3.6 22.6v1.3h15.7V6.2l-2-1.4v17.8z" fill="#222"/>
<rect x="2.6" y="5" width="14.4" height="17.6" fill="#fff" stroke="#b4b4b4" stroke-width=".8"/>
<path d="M3.9 4.7h4.1v1.9H3.9zM11 4.7h4.7v1.9H11z" fill="#111"/>
<rect x="3.9" y="7.8" width="4.1" height="4.2" rx="1" fill="#ff00ff"/>
<rect x="11.7" y="17" width="4.3" height="5.5" rx="1.2" fill="#00ffff"/>
<path d="M5 15.1h9.8M5 17.6h6.6M5 21.3h2.8M12 9.4h3" stroke="#c8c8c8" stroke-width="1"/>
</g>
<g fill="none" stroke="#2b2b2b" stroke-width="1">
<path d="M1383 13.9h12" stroke="#6e6e6e" stroke-width="1.1"/>
<rect x="1441.6" y="10.6" width="8.6" height="8.6" rx="1.6" stroke-width="1.35"/>
<path d="M1444 8.5h6.2a2.4 2.4 0 0 1 2.4 2.4v6" stroke-width="1.35"/>
<path d="M1499.5 8.3l11.4 11.4M1510.9 8.3l-11.4 11.4" stroke-width="1.2"/>
</g>
<path d="M106.5 94.5l6.9 6.4M113.4 94.5l-6.9 6.4" stroke="#111" stroke-width="1.7"/>
<path d="M1490 97.8h7l-3.5 3.5z" fill="#000"/>
<path d="M1507.4 89v17.4" stroke="#c0c0c0" stroke-width="1.1"/>
<path d="M1517.6 94.7l3.4 6.4M1521 94.7l-3.4 6.4M1522.8 94.7l3.4 6.4M1526.2 94.7l-3.4 6.4" stroke="#000" stroke-width="1.5"/>
<rect x="39.400000000000006" y="115.8" width="9.4" height="9.6" fill="#000"/><path d="M58.4 122.2V125M68.0 122.2V125M77.6 122.2V125M96.8 122.2V125M106.4 122.2V125M116.0 122.2V125M125.6 122.2V125M144.8 122.2V125M154.4 122.2V125M164.0 122.2V125M173.6 122.2V125M192.8 122.2V125M202.4 122.2V125M212.0 122.2V125M221.6 122.2V125M240.8 122.2V125M250.4 122.2V125M260.0 122.2V125M269.6 122.2V125M288.8 122.2V125M298.4 122.2V125M308.0 122.2V125M317.6 122.2V125M336.8 122.2V125M346.4 122.2V125M356.0 122.2V125M365.6 122.2V125M384.8 122.2V125M394.4 122.2V125M404.0 122.2V125M413.6 122.2V125M432.8 122.2V125M442.4 122.2V125M452.0 122.2V125M461.6 122.2V125M480.8 122.2V125M490.4 122.2V125M500.0 122.2V125M509.6 122.2V125M528.8 122.2V125M538.4 122.2V125M548.0 122.2V125M557.6 122.2V125M576.8 122.2V125M586.4 122.2V125M596.0 122.2V125M605.6 122.2V125M624.8 122.2V125M634.4 122.2V125M644.0 122.2V125M653.6 122.2V125M672.8 122.2V125M682.4 122.2V125M692.0 122.2V125M701.6 122.2V125M720.8 122.2V125M730.4 122.2V125M740.0 122.2V125M749.6 122.2V125M768.8 122.2V125M778.4 122.2V125M788.0 122.2V125M797.6 122.2V125M816.8 122.2V125M826.4 122.2V125M836.0 122.2V125M845.6 122.2V125M864.8 122.2V125M874.4 122.2V125M884.0 122.2V125M893.6 122.2V125M912.8 122.2V125M922.4 122.2V125M932.0 122.2V125M941.6 122.2V125M960.8 122.2V125M970.4 122.2V125M980.0 122.2V125M989.6 122.2V125M1008.8 122.2V125M1018.4 122.2V125M1028.0 122.2V125M1037.6 122.2V125M1056.8 122.2V125M1066.4 122.2V125M1076.0 122.2V125M1085.6 122.2V125M1104.8 122.2V125M1114.4 122.2V125M1124.0 122.2V125M1133.6 122.2V125M1152.8 122.2V125M1162.4 122.2V125M1172.0 122.2V125M1181.6 122.2V125M1200.8 122.2V125M1210.4 122.2V125M1220.0 122.2V125M1229.6 122.2V125M1248.8 122.2V125M1258.4 122.2V125M1268.0 122.2V125M1277.6 122.2V125M1296.8 122.2V125M1306.4 122.2V125M1316.0 122.2V125M1325.6 122.2V125M1344.8 122.2V125M1354.4 122.2V125M1364.0 122.2V125M1373.6 122.2V125M1392.8 122.2V125M1402.4 122.2V125M1412.0 122.2V125M1421.6 122.2V125M1440.8 122.2V125M1450.4 122.2V125M1460.0 122.2V125M1469.6 122.2V125M1488.8 122.2V125M87.2 119.8V125M183.2 119.8V125M279.2 119.8V125M375.2 119.8V125M471.2 119.8V125M567.2 119.8V125M663.2 119.8V125M759.2 119.8V125M855.2 119.8V125M951.2 119.8V125M1047.2 119.8V125M1143.2 119.8V125M1239.2 119.8V125M1335.2 119.8V125M1431.2 119.8V125M135.2 115.8V125M231.2 115.8V125M327.2 115.8V125M423.2 115.8V125M519.2 115.8V125M615.2 115.8V125M711.2 115.8V125M807.2 115.8V125M903.2 115.8V125M999.2 115.8V125M1095.2 115.8V125M1191.2 115.8V125M1287.2 115.8V125M1383.2 115.8V125M1479.2 115.8V125M1498.4 115.8V125" stroke="#161616" stroke-width="1"/><path d="M39.2 125.3h1460.0" stroke="#0c0c0c" stroke-width="1.2"/><text x="40.800000000000004" y="124" font-family="'Liberation Sans',sans-serif" font-size="9.7" fill="#fff">0</text><text x="136.6" y="124" font-family="'Liberation Sans',sans-serif" font-size="9.7" fill="#222">1</text><text x="232.6" y="124" font-family="'Liberation Sans',sans-serif" font-size="9.7" fill="#222">2</text><text x="328.6" y="124" font-family="'Liberation Sans',sans-serif" font-size="9.7" fill="#222">3</text><text x="424.6" y="124" font-family="'Liberation Sans',sans-serif" font-size="9.7" fill="#222">4</text><text x="520.6" y="124" font-family="'Liberation Sans',sans-serif" font-size="9.7" fill="#222">5</text><text x="616.6" y="124" font-family="'Liberation Sans',sans-serif" font-size="9.7" fill="#222">6</text><text x="712.6" y="124" font-family="'Liberation Sans',sans-serif" font-size="9.7" fill="#222">7</text><text x="808.6" y="124" font-family="'Liberation Sans',sans-serif" font-size="9.7" fill="#222">8</text><text x="904.6" y="124" font-family="'Liberation Sans',sans-serif" font-size="9.7" fill="#222">9</text><text x="1000.6" y="124" font-family="'Liberation Sans',sans-serif" font-size="9.7" fill="#222">10</text><text x="1096.6" y="124" font-family="'Liberation Sans',sans-serif" font-size="9.7" fill="#222">11</text><text x="1192.6" y="124" font-family="'Liberation Sans',sans-serif" font-size="9.7" fill="#222">12</text><text x="1288.6" y="124" font-family="'Liberation Sans',sans-serif" font-size="9.7" fill="#222">13</text><text x="1384.6" y="124" font-family="'Liberation Sans',sans-serif" font-size="9.7" fill="#222">14</text><text x="1480.6" y="124" font-family="'Liberation Sans',sans-serif" font-size="9.7" fill="#222">15</text>
<g fill="#a3a3a3">
<path d="M1525.3 128.4l3.8 5.6h-7.6z"/><path d="M1521.4 746.6h7.6l-3.8 5.5z"/>
<path d="M1502.3 765.6l5.7 3.7-5.7 3.7z"/><path d="M18.4 765.6l-5.7 3.7 5.7 3.7z"/></g>
<rect x="1516" y="116" width="19.4" height="4.4" fill="#f4f4f4"/>
<path d="M1516 120h19M1534.8 116v4.4" stroke="#8a8a8a" stroke-width="1" fill="none"/>
<rect x="0" y="759.6" width="6" height="19" fill="#fafafa"/>
<path d="M0 778.2h6M5.6 759.6v19" stroke="#808080" stroke-width="1.2" fill="none"/><path d="M.5 759v19.4" stroke="#a6a6a6" stroke-width="1"/></svg>
</div></body></html>
